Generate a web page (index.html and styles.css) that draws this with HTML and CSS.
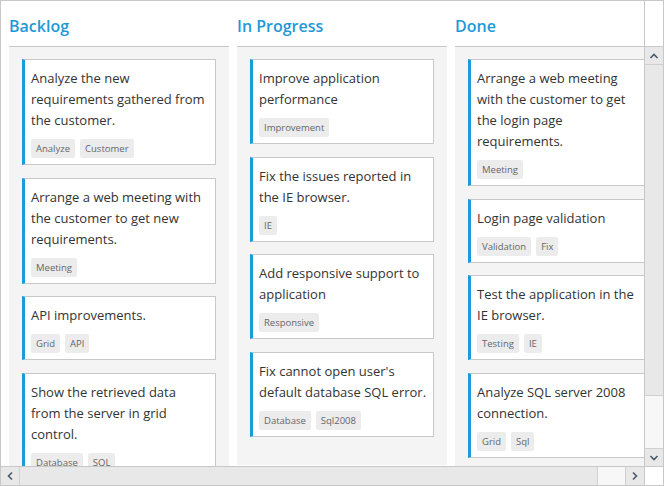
FILE: index.html
```html
<!DOCTYPE html>
<html>
<head>
<meta charset="utf-8">
<link rel="stylesheet" href="styles.css">
</head>
<body>
<div class="kanban">
  <div class="main">
    <div class="viewport">
      <div class="board">
        <div class="headers">
          <div class="head w1">Backlog</div>
          <div class="head w2">In Progress</div>
          <div class="head w2">Done</div>
        </div>
        <div class="columns">
          <div class="col w1">
            <div class="card"><div class="txt">Analyze the new requirements gathered from the customer.</div><div class="tags"><span class="tag">Analyze</span><span class="tag">Customer</span></div></div>
            <div class="card"><div class="txt">Arrange a web meeting with the customer to get new requirements.</div><div class="tags"><span class="tag">Meeting</span></div></div>
            <div class="card"><div class="txt">API improvements.</div><div class="tags"><span class="tag">Grid</span><span class="tag">API</span></div></div>
            <div class="card"><div class="txt">Show the retrieved data from the server in grid control.</div><div class="tags"><span class="tag">Database</span><span class="tag">SQL</span></div></div>
          </div>
          <div class="col w2">
            <div class="card"><div class="txt">Improve application performance</div><div class="tags"><span class="tag">Improvement</span></div></div>
            <div class="card"><div class="txt">Fix the issues reported in the IE browser.</div><div class="tags"><span class="tag">IE</span></div></div>
            <div class="card"><div class="txt">Add responsive support to application</div><div class="tags"><span class="tag">Responsive</span></div></div>
            <div class="card"><div class="txt">Fix cannot open user's default database SQL error.</div><div class="tags"><span class="tag">Database</span><span class="tag">Sql2008</span></div></div>
          </div>
          <div class="col w2">
            <div class="card"><div class="txt">Arrange a web meeting with the customer to get the login page requirements.</div><div class="tags"><span class="tag">Meeting</span></div></div>
            <div class="card"><div class="txt">Login page validation</div><div class="tags"><span class="tag">Validation</span><span class="tag">Fix</span></div></div>
            <div class="card"><div class="txt">Test the application in the IE browser.</div><div class="tags"><span class="tag">Testing</span><span class="tag">IE</span></div></div>
            <div class="card"><div class="txt">Analyze SQL server 2008 connection.</div><div class="tags"><span class="tag">Grid</span><span class="tag">Sql</span></div></div>
          </div>
        </div>
      </div>
    </div>
    <div class="vside">
      <div class="vhead"></div>
      <div class="vbar">
        <div class="btn"><svg width="10" height="8" viewBox="0 0 10 8"><polyline points="1.5,6 5,2.5 8.5,6" fill="none" stroke="#4a5a6a" stroke-width="1.6"/></svg></div>
        <div class="vthumb"></div>
        <div class="vtrack"></div>
        <div class="btn btop"><svg width="10" height="8" viewBox="0 0 10 8"><polyline points="1.5,2 5,5.5 8.5,2" fill="none" stroke="#4a5a6a" stroke-width="1.6"/></svg></div>
      </div>
    </div>
  </div>
  <div class="bottom">
    <div class="hbar">
      <div class="hbtn"><svg width="8" height="10" viewBox="0 0 8 10"><polyline points="6,1.5 2.5,5 6,8.5" fill="none" stroke="#4a5a6a" stroke-width="1.6"/></svg></div>
      <div class="hthumb"></div>
      <div class="htrack"></div>
      <div class="hbtn hleft"><svg width="8" height="10" viewBox="0 0 8 10"><polyline points="2,1.5 5.5,5 2,8.5" fill="none" stroke="#4a5a6a" stroke-width="1.6"/></svg></div>
    </div>
    <div class="corner"></div>
  </div>
</div>
</body>
</html>
```

FILE: styles.css
```css
* { box-sizing: border-box; }
html, body { margin: 0; padding: 0; background: #fff; }
body { font-family: "Open Sans", "Noto Sans", sans-serif; }

.kanban {
  width: 664px;
  height: 486px;
  border: 1px solid #c8c8c8;
  display: flex;
  flex-direction: column;
  overflow: hidden;
}

.main {
  height: 465px;
  display: flex;
}

.viewport {
  width: 643px;
  height: 465px;
  overflow: hidden;
}

.board {
  width: 680px;
  padding-left: 8px;
}

.headers {
  display: flex;
  gap: 8px;
}

.head {
  height: 46px;
  border-bottom: 1px solid #c8c8c8;
  color: #1f98d6;
  font-size: 16px;
  font-weight: 600;
  line-height: 20px;
  padding-top: 15px;
  flex: none;
}

.w1 { width: 220px; }
.w2 { width: 210px; }

.columns {
  display: flex;
  gap: 8px;
  align-items: flex-start;
}

.col {
  flex: none;
  background: #f4f4f4;
  padding: 12px 13px 12px 13px;
  display: flex;
  flex-direction: column;
  gap: 12.5px;
  min-height: 418px;
}

.card {
  background: #fff;
  border: 1px solid #c8c8c8;
  border-left: 3px solid #1a9bdb;
  padding: 8px 6px 6px 6px;
}

.col.w1 .card { padding-right: 8px; }

.txt {
  font-size: 13px;
  line-height: 21px;
  color: #333;
}

.tags {
  display: flex;
  gap: 5px;
  margin-top: 8px;
}

.tag {
  background: #ececec;
  color: #666;
  font-size: 9.5px;
  height: 19px;
  line-height: 19px;
  padding: 0 5px;
  border-radius: 2px;
}

.vside {
  width: 19px;
  border-left: 1px solid #c8c8c8;
  display: flex;
  flex-direction: column;
}

.vhead {
  height: 46px;
  border-bottom: 1px solid #c8c8c8;
}

.vbar {
  flex: 1;
  display: flex;
  flex-direction: column;
  background: #f7f7f7;
}

.btn {
  height: 18px;
  background: #e8e8e8;
  display: flex;
  align-items: center;
  justify-content: center;
  border-bottom: 1px solid #d0d0d0;
}

.btn.btop { border-bottom: 0; border-top: 1px solid #d0d0d0; }

.vthumb {
  height: 331px;
  background: #e8e8e8;
  border-bottom: 1px solid #d0d0d0;
}

.vtrack { flex: 1; }

.bottom {
  flex: 1;
  display: flex;
  border-top: 1px solid #c8c8c8;
}

.hbar {
  width: 643px;
  display: flex;
  background: #f7f7f7;
}

.hbtn {
  width: 19px;
  background: #e8e8e8;
  border-right: 1px solid #d0d0d0;
  display: flex;
  align-items: center;
  justify-content: center;
}

.hbtn.hleft { border-right: 0; border-left: 1px solid #d0d0d0; }

.hthumb {
  width: 578px;
  background: #e8e8e8;
  border-right: 1px solid #d0d0d0;
}

.htrack { flex: 1; }

.corner {
  flex: 1;
  border-left: 1px solid #c8c8c8;
  background: #fff;
}
```
